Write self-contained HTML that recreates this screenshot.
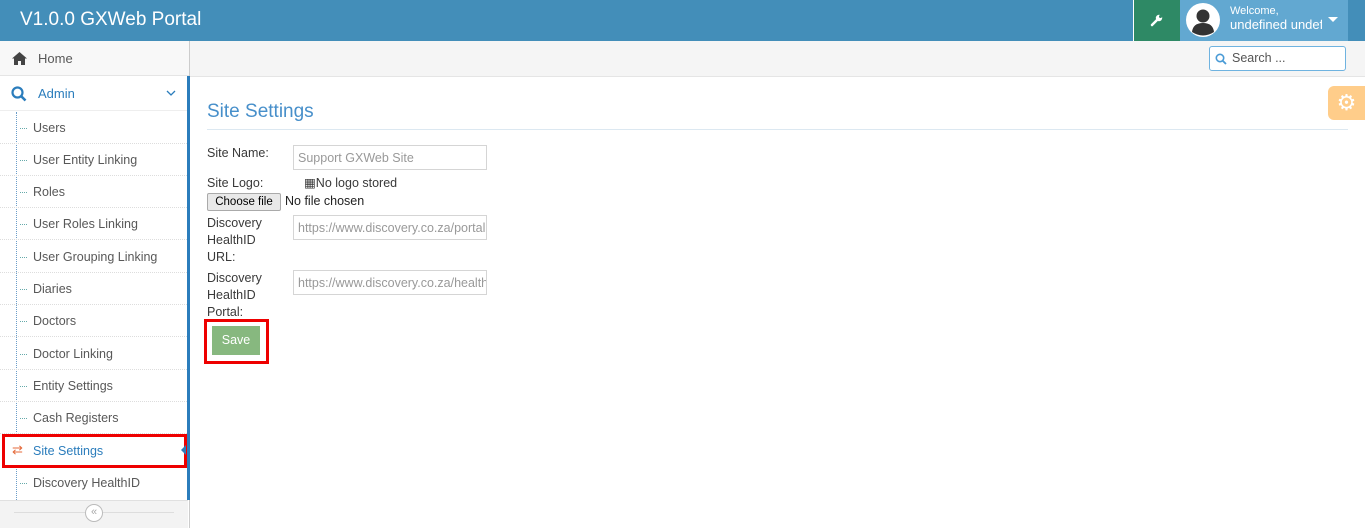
<!DOCTYPE html>
<html><head><style>
*{box-sizing:border-box;margin:0;padding:0}
body{width:1365px;height:528px;overflow:hidden;font-family:"Liberation Sans",sans-serif;font-size:13px;color:#393939;background:#fff;position:relative}
.hdr{position:absolute;left:0;top:0;width:1365px;height:41px;background:#438eb9}
.hdr .t{position:absolute;left:20px;top:9px;color:#fff;font-size:19px}
.wr{position:absolute;left:1133px;top:0;width:47px;height:41px;background:#2e8965;border-left:1px solid #fff}
.us{position:absolute;left:1180px;top:0;width:168px;height:41px;background:#62a8d1;color:#fff}
.sb{position:absolute;left:0;top:41px;width:190px;height:487px;background:#fff;border-right:1px solid #ccc}
.home{height:35px;background:#f8f8f8;border-bottom:1px solid #e5e5e5;padding:10px 0 0 38px;color:#585858}
.adm{height:35px;padding:10px 0 0 38px;color:#2b7dbc;border-bottom:1px solid #eee}
.it{position:absolute;left:0;width:187px;height:32px;padding:9px 0 0 33px;color:#585858;border-bottom:1px dotted #ddd;font-size:12.5px}
.it:before{content:"";position:absolute;left:20px;top:16px;width:7px;border-top:1px dotted #6aa}
.bc{position:absolute;left:190px;top:41px;width:1175px;height:36px;background:#f5f5f5;border-bottom:1px solid #e5e5e5}
.lbl{position:absolute;left:207px;font-size:12.5px;color:#393939;line-height:17px}
.inp{position:absolute;left:293px;width:194px;height:25px;border:1px solid #d5d5d5;color:#999;padding:5px 4px;font-size:12.5px;white-space:nowrap;overflow:hidden}
</style></head><body>
<div class="hdr"><div class="t">V1.0.0 GXWeb Portal</div></div>
<div class="wr"><svg style="position:absolute;left:16px;top:13px" width="14" height="14" viewBox="0 0 14 14"><path d="M2 12 L7 7" stroke="#fff" stroke-width="2.5" stroke-linecap="round"/><circle cx="9" cy="5" r="3.2" fill="#fff"/><circle cx="10.5" cy="3.5" r="1.5" fill="#2e8965"/></svg></div>
<div class="us">
<svg style="position:absolute;left:6px;top:3px" width="34" height="34" viewBox="0 0 34 34"><circle cx="17" cy="17" r="17" fill="#fff"/><circle cx="17" cy="13" r="6.5" fill="#333"/><path d="M6 29 Q7 20 17 20 Q27 20 28 29 Q17 36 6 29Z" fill="#333"/></svg>
<div style="position:absolute;left:50px;top:5px;font-size:11px">Welcome,</div>
<div style="position:absolute;left:50px;top:17px;font-size:13px;width:92px;overflow:hidden;white-space:nowrap">undefined undef</div>
<div style="position:absolute;left:148px;top:17px;border:5px solid transparent;border-top-color:#fff;border-bottom:0"></div>
</div>
<div class="sb">
<div class="home">Home</div>
<svg style="position:absolute;left:12px;top:11px" width="15" height="13" viewBox="0 0 15 13"><path d="M7.5 0 L15 6.5 L13 6.5 L13 13 L9 13 L9 9 L6 9 L6 13 L2 13 L2 6.5 L0 6.5Z" fill="#444"/></svg>
<div class="adm">Admin</div>
<svg style="position:absolute;left:11px;top:45px" width="16" height="16" viewBox="0 0 16 16"><circle cx="6.5" cy="6.5" r="5" fill="none" stroke="#2b7dbc" stroke-width="2.2"/><path d="M10 10 L14.5 14.5" stroke="#2b7dbc" stroke-width="2.6"/></svg>
<svg style="position:absolute;left:166px;top:49px" width="10" height="7" viewBox="0 0 10 7"><path d="M1 1 L5 5 L9 1" fill="none" stroke="#2b7dbc" stroke-width="1.3"/></svg>
<div style="position:absolute;left:16px;top:71px;height:388px;border-left:1px dotted #6a9dc9"></div>
<div style="position:absolute;left:187px;top:35px;width:3px;height:424px;background:#2b7dbc"></div>
</div>
<div class="it" style="top:112px">Users</div>
<div class="it" style="top:144px">User Entity Linking</div>
<div class="it" style="top:176px">Roles</div>
<div class="it" style="top:208px">User Roles Linking</div>
<div class="it" style="top:241px">User Grouping Linking</div>
<div class="it" style="top:273px">Diaries</div>
<div class="it" style="top:305px">Doctors</div>
<div class="it" style="top:338px">Doctor Linking</div>
<div class="it" style="top:370px">Entity Settings</div>
<div class="it" style="top:402px">Cash Registers</div>
<div style="position:absolute;left:2px;top:434px;width:185px;height:34px;border:3px solid #e00;color:#2b7dbc;padding:7px 0 0 28px;font-size:12.5px;background:#fff"><span style="position:absolute;left:7px;top:5px;color:#e4693a;font-size:13px">&#8644;</span>Site Settings</div>
<div style="position:absolute;left:181px;top:445px;border:5px solid transparent;border-right-color:#2b7dbc;border-left:0"></div>
<div class="it" style="top:467px;border-bottom:0">Discovery HealthID</div>
<div style="position:absolute;left:0;top:500px;width:188px;height:28px;background:#f3f3f3;border-top:1px solid #e0e0e0">
<div style="position:absolute;left:14px;top:11px;width:160px;border-top:1px solid #ddd"></div>
<div style="position:absolute;left:85px;top:3px;width:18px;height:18px;border:1px solid #bbb;border-radius:50%;background:#fff;font-size:11px;color:#aaa;text-align:center;line-height:15px">&laquo;</div></div>
<div class="bc"><div style="position:absolute;left:1019px;top:5px;width:137px;height:25px;border:1px solid #6fb3e0;border-radius:3px;background:#fff;padding:4px 0 0 22px;font-size:12.5px;color:#555">Search ...<svg style="position:absolute;left:5px;top:6px" width="12" height="12" viewBox="0 0 12 12"><circle cx="5" cy="5" r="3.7" fill="none" stroke="#4a9bd6" stroke-width="1.6"/><path d="M7.7 7.7 L11 11" stroke="#4a9bd6" stroke-width="1.8"/></svg></div></div>
<div style="position:absolute;left:1328px;top:86px;width:37px;height:34px;background:#ffcd8a;border-radius:6px 0 0 6px;color:#fff;font-size:22px;text-align:center;line-height:34px">&#9881;</div>
<div style="position:absolute;left:207px;top:101px;font-size:19px;color:#478fca">Site Settings</div>
<div style="position:absolute;left:207px;top:129px;width:1141px;border-top:1px solid #dce8f1"></div>
<div class="lbl" style="top:145px">Site Name:</div>
<div class="inp" style="top:145px">Support GXWeb Site</div>
<div class="lbl" style="top:175px">Site Logo:</div>
<div style="position:absolute;left:304px;top:175px;font-size:12.5px;line-height:17px">&#9638;No logo stored</div>
<div style="position:absolute;left:207px;top:193px;width:74px;height:18px;border:1px solid #aaa;background:#e9e9e9;border-radius:2px;font-size:11.5px;text-align:center;line-height:16px;color:#000">Choose file</div>
<div style="position:absolute;left:285px;top:194px;font-size:12.5px;color:#222">No file chosen</div>
<div class="lbl" style="top:215px">Discovery<br>HealthID<br>URL:</div>
<div class="inp" style="top:215px">https://www.discovery.co.za/portal</div>
<div class="lbl" style="top:270px">Discovery<br>HealthID<br>Portal:</div>
<div class="inp" style="top:270px">https://www.discovery.co.za/health</div>
<div style="position:absolute;left:204px;top:319px;width:65px;height:45px;border:3px solid #e00"></div>
<div style="position:absolute;left:212px;top:326px;width:48px;height:29px;background:#87b87f;color:#fff;text-align:center;line-height:29px;font-size:12.5px">Save</div>
</body></html>
